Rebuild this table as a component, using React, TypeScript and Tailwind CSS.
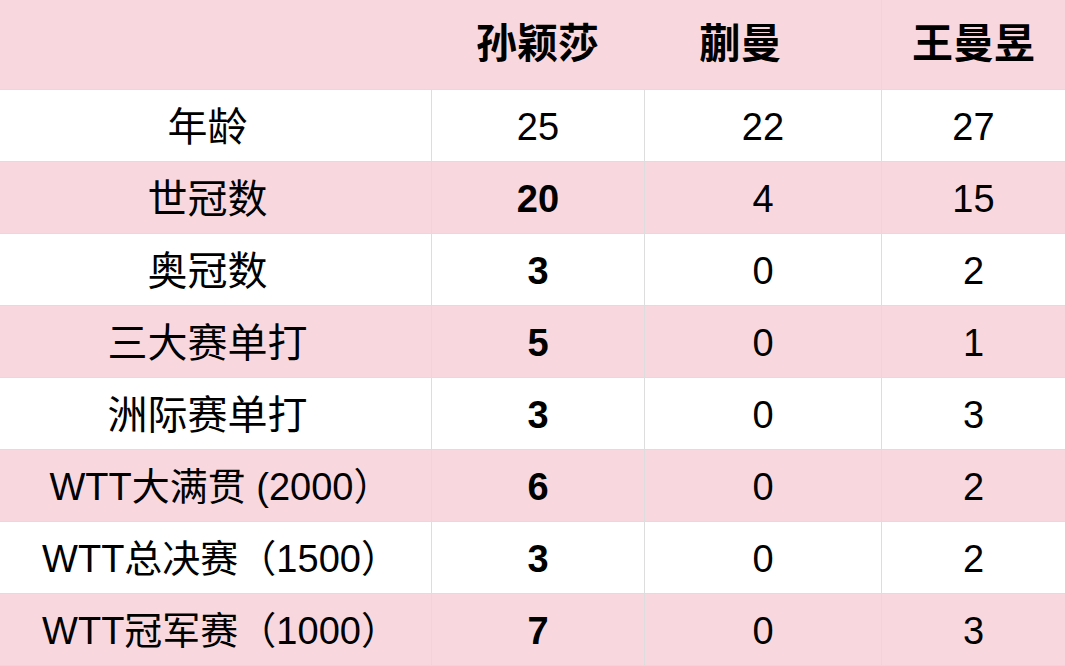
const players = ["孙颖莎", "蒯曼", "王曼昱"];

const rows: { label: string; values: string[]; latin?: boolean }[] = [
  { label: "年龄", values: ["25", "22", "27"] },
  { label: "世冠数", values: ["20", "4", "15"] },
  { label: "奥冠数", values: ["3", "0", "2"] },
  { label: "三大赛单打", values: ["5", "0", "1"] },
  { label: "洲际赛单打", values: ["3", "0", "3"] },
  { label: "WTT大满贯 (2000）", values: ["6", "0", "2"], latin: true },
  { label: "WTT总决赛（1500）", values: ["3", "0", "2"], latin: true },
  { label: "WTT冠军赛（1000）", values: ["7", "0", "3"], latin: true },
];

export default function App() {
  return (
    <div
      className="w-[1065px] h-[666px] overflow-hidden bg-white text-black"
      style={{ fontFamily: '"Liberation Sans", "Noto Sans CJK SC", sans-serif' }}
    >
      {/* header */}
      <div className="grid grid-cols-[431px_213px_237px_1fr] h-[90px] bg-[#f8d8de] border-b border-[#dddddd]">
        <div />
        <div className="flex items-center justify-center text-[41px] font-bold">{players[0]}</div>
        <div className="flex items-center justify-center text-[41px] font-bold pr-[44px]">{players[1]}</div>
        <div className="flex items-center justify-center text-[41px] font-bold border-l border-[#dddddd]">
          {players[2]}
        </div>
      </div>

      {rows.map((row, i) => (
        <div
          key={row.label}
          className={`grid grid-cols-[431px_213px_237px_1fr] h-[72px] border-b border-[#dddddd] ${
            i % 2 === 1 ? "bg-[#f8d8de]" : "bg-white"
          }`}
        >
          <div
            className={`flex items-center justify-center pt-[3px] whitespace-nowrap ${
              row.latin ? "text-[38px] pl-[10px]" : "text-[40px] pr-[16px]"
            }`}
          >
            {row.label}
          </div>
          {row.values.map((v, j) => (
            <div
              key={j}
              className={`flex items-center justify-center pt-[4px] text-[38px] border-l border-[#dddddd] ${
                j === 0 && i > 0 ? "font-bold" : ""
              }`}
            >
              {v}
            </div>
          ))}
        </div>
      ))}
    </div>
  );
}
